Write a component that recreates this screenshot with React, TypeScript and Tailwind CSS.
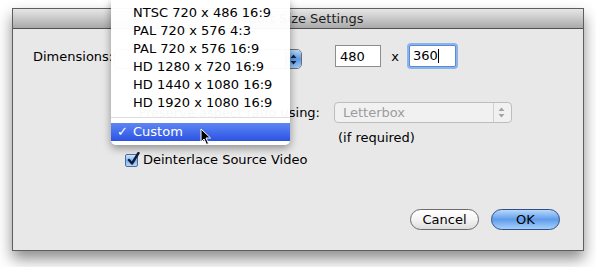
import * as React from "react";

const menuItems = [
  "NTSC 720 x 486 16:9",
  "PAL 720 x 576 4:3",
  "PAL 720 x 576 16:9",
  "HD 1280 x 720 16:9",
  "HD 1440 x 1080 16:9",
  "HD 1920 x 1080 16:9",
];

const Arrows: React.FC<{ color: string }> = ({ color }) => (
  <svg width="7" height="11" viewBox="0 0 7 11">
    <path d="M3.5 0.5L6.5 4H0.5z" fill={color} />
    <path d="M3.5 10.5L6.5 7H0.5z" fill={color} />
  </svg>
);

const App: React.FC = () => {
  return (
    <div
      className="w-[596px] h-[267px] bg-white overflow-hidden pt-[8px] pl-[12px] text-[13px] text-black"
      style={{ fontFamily: '"DejaVu Sans", "Liberation Sans", sans-serif' }}
    >
      <div className="relative w-[572px] h-[243px] border border-[#5e5e5e] bg-[#e8e8e8] shadow-[0_8px_14px_rgba(0,0,0,0.45)]">
        {/* Title bar */}
        <div className="h-[20px] border-b border-[#515151] bg-gradient-to-b from-[#e6e6e6] via-[#c9c9c9] to-[#a9a9a9] flex items-center justify-center text-[13px] text-[#1e1e1e]">
          Export Size Settings
        </div>

        {/* Dimensions row */}
        <div className="mt-[16px] h-[22px] flex items-start pl-[20px]">
          <div className="w-[81px] h-[22px] leading-[24px]">Dimensions:</div>
          <div className="mt-[4px] w-[188px] h-[20px] rounded-[5px] border border-[#6f6f6f] bg-white flex justify-end overflow-hidden">
            <div className="w-[16px] h-full bg-gradient-to-b from-[#bcd9f7] via-[#5d98e6] to-[#9fcaf5] border-l border-[#3a5f9a] flex items-center justify-center">
              <Arrows color="#10223f" />
            </div>
          </div>
          <div className="ml-[33px] w-[46px] h-[22px] border border-[#8d8d8d] bg-white px-[4px] leading-[21px]">
            480
          </div>
          <div className="w-[28px] h-[22px] leading-[23px] text-center">x</div>
          <div className="w-[47px] h-[22px] border border-[#5a8ad3] bg-white px-[3px] leading-[20px] shadow-[0_0_0_2px_#8cb4ea] rounded-[2px] flex items-center">
            360<span className="inline-block w-px h-[14px] bg-black" />
          </div>
        </div>

        {/* Aspect ratio row */}
        <div className="mt-[35px] h-[21px] flex items-center">
          <div className="w-[307px] text-right">Preserve aspect ratio using:</div>
          <div className="ml-[14px] w-[178px] h-[21px] rounded-[4px] border border-[#bdbdbd] bg-[#f1f1f1] flex items-center">
            <div className="flex-1 pl-[8px] text-[#9c9c9c]">Letterbox</div>
            <div className="w-[16px] h-full border-l border-[#cfcfcf] flex items-center justify-center mr-[2px]">
              <Arrows color="#a3a3a3" />
            </div>
          </div>
        </div>

        <div className="mt-[8px] h-[14px] leading-[14px] pl-[325px]">(if required)</div>

        {/* Checkbox row */}
        <div className="mt-[8px] h-[14px] flex items-center pl-[112px]">
          <div className="relative w-[13px] h-[13px] rounded-[2px] border border-[#4d6c9c] bg-gradient-to-b from-[#d5e8fb] via-[#7fb2ee] to-[#b7d8f7]">
            <svg className="absolute -top-[3px] left-[1px]" width="13" height="14" viewBox="0 0 13 14">
              <path d="M2 8 L5 11.5 L11.5 1" stroke="#0f1d3a" strokeWidth="2.4" fill="none" strokeLinecap="round" strokeLinejoin="round" />
            </svg>
          </div>
          <div className="ml-[5px] leading-[16px]">Deinterlace Source Video</div>
        </div>

        {/* Buttons */}
        <div className="mt-[42px] flex justify-end gap-[12px] pr-[23px]">
          <button className="w-[69px] h-[21px] rounded-full border border-[#6b6b6b] bg-gradient-to-b from-white via-[#f4f4f4] to-[#dcdcdc] text-[13px] leading-[19px] text-black">
            Cancel
          </button>
          <button className="w-[69px] h-[21px] rounded-full border border-[#2f4f86] bg-gradient-to-b from-[#b8d8fa] via-[#5f9ceb] to-[#a6d0fa] text-[13px] leading-[19px] text-black">
            OK
          </button>
        </div>

        {/* Pop-up menu */}
        <div className="absolute left-[98px] -top-[9px] w-[179px] pt-[4px] pb-[4px] bg-white/[0.97] rounded-b-[5px] shadow-[0_3px_8px_rgba(0,0,0,0.4)]">
          {menuItems.map((item) => (
            <div key={item} className="h-[18px] leading-[18px] pl-[22px]">
              {item}
            </div>
          ))}
          <div className="mt-[5px] mb-[5px] h-px bg-[#dedede]" />
          <div className="relative h-[18px] leading-[18px] pl-[22px] bg-gradient-to-b from-[#5f86f4] to-[#2c52e3] text-white">
            <span className="absolute left-[6px]">✓</span>
            Custom
          </div>
        </div>

        {/* Cursor */}
        <svg className="absolute left-[187px] top-[119px]" width="12" height="18" viewBox="0 0 12 18">
          <path d="M1 1 L1 14 L4 11 L6.5 16.5 L8.5 15.5 L6 10 L10.5 10 Z" fill="#000" stroke="#fff" strokeWidth="1" strokeLinejoin="round" />
        </svg>
      </div>
    </div>
  );
};

export default App;
